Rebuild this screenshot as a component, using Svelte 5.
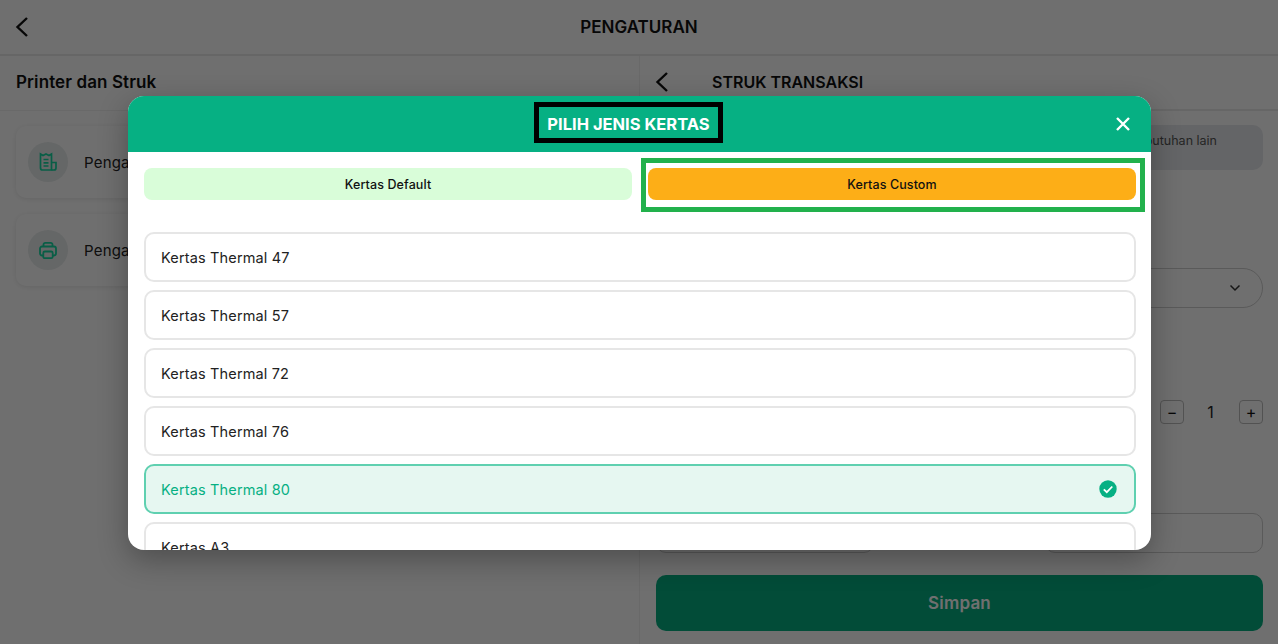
<script>
  const kertas = [
    { name: "Kertas Thermal 47" },
    { name: "Kertas Thermal 57" },
    { name: "Kertas Thermal 72" },
    { name: "Kertas Thermal 76" },
    { name: "Kertas Thermal 80", active: true },
    { name: "Kertas A3" }
  ];
</script>

<div class="page">
  <header class="topbar">
    <svg class="back" width="14" height="24" viewBox="0 0 14 24"><path d="M12 3 L2.500 12 L12 21" /></svg>
    <h1>PENGATURAN</h1>
  </header>

  <div class="columns">
    <section class="left">
      <h2 class="left-title">Printer dan Struk</h2>
      <div class="cards">
        <div class="card">
          <span class="circle">
            <svg width="20" height="20" viewBox="0 0 20 20" fill="none" stroke="#15d5a0" stroke-width="1.700">
              <path d="M2.500 2 L5 3.500 L8 2 L11 3.500 L13.500 2 V18 H4.500 A2 2 0 0 1 2.500 16 Z" />
              <path d="M5.500 7.500 H10.500 M5.500 10.800 H10.500 M5.500 14 H10.500 M13.500 10.500 H18 V16 A2 2 0 0 1 16 18 H13.500" />
            </svg>
          </span>
          <span>Pengaturan Struk</span>
        </div>
        <div class="card">
          <span class="circle">
            <svg width="20" height="20" viewBox="0 0 20 20" fill="none" stroke="#15d5a0" stroke-width="1.800">
              <path d="M5.500 6.500 V4.500 A1.800 1.800 0 0 1 7.300 2.800 H12.700 A1.800 1.800 0 0 1 14.500 4.500 V6.500" />
              <path d="M5 15.500 H4 A2 2 0 0 1 2 13.500 V8.500 A2 2 0 0 1 4 6.500 H16 A2 2 0 0 1 18 8.500 V13.500 A2 2 0 0 1 16 15.500 H15" />
              <rect x="5.300" y="11.500" width="9.400" height="6.700" rx="1.500" />
            </svg>
          </span>
          <span>Pengaturan Printer</span>
        </div>
      </div>
    </section>

    <section class="right">
      <div class="right-head">
        <svg class="back" width="14" height="24" viewBox="0 0 14 24"><path d="M12 3 L2.500 12 L12 21" /></svg>
        <h2>STRUK TRANSAKSI</h2>
      </div>
      <div class="right-body">
        <div class="note">Sesuaikan jenis kertas dengan kebutuhan lain</div>
        <div class="select">
          <svg width="12" height="8" viewBox="0 0 12 8" fill="none" stroke="#333" stroke-width="1.500"><path d="M1.500 1.500 L6 6 L10.500 1.500" /></svg>
        </div>
        <div class="stepper">
          <span class="step">−</span>
          <span class="count">1</span>
          <span class="step">+</span>
        </div>
        <div class="inputs">
          <div class="input"></div>
          <div class="input"></div>
        </div>
        <button class="save">Simpan</button>
      </div>
    </section>
  </div>

  <div class="backdrop"></div>

  <div class="modal">
    <div class="modal-head">
      <h3>PILIH JENIS KERTAS</h3>
      <svg class="close" width="16" height="16" viewBox="0 0 16 16"><path d="M2 2 L14 14 M14 2 L2 14" /></svg>
    </div>
    <div class="tabs">
      <button class="tab">Kertas Default</button>
      <button class="tab custom">Kertas Custom<span class="mark"></span></button>
    </div>
    <div class="list">
      {#each kertas as item}
        <div class="row" class:active={item.active}>
          <span>{item.name}</span>
          {#if item.active}
            <svg width="18" height="18" viewBox="0 0 18 18">
              <circle cx="9" cy="9" r="8.700" fill="#06b083" />
              <path d="M4.800 9.300 L7.800 12.200 L13.300 6.500" fill="none" stroke="#fff" stroke-width="1.800" />
            </svg>
          {/if}
        </div>
      {/each}
    </div>
  </div>
</div>

<style>
  :global(body) {
    margin: 0;
    background: #fff;
  }
  * {
    box-sizing: border-box;
  }
  h1, h2, h3 {
    margin: 0;
  }
  .page {
    position: relative;
    width: 1278px;
    height: 644px;
    overflow: hidden;
    font-family: "Inter", "Liberation Sans", sans-serif;
    color: #222;
    background: #fdfdfd;
  }
  .topbar {
    position: relative;
    height: 56px;
    display: flex;
    align-items: center;
    justify-content: center;
    padding-bottom: 1px;
    border-bottom: 2px solid #e8e8e8;
  }
  .topbar .back {
    position: absolute;
    left: 15px;
    top: 15px;
  }
  .back path {
    fill: none;
    stroke: #111;
    stroke-width: 2.400;
  }
  .topbar h1 {
    font-size: 17px;
    font-weight: 600;
    color: #111;
  }
  .columns {
    display: flex;
    height: 588px;
  }
  .left {
    width: 640px;
    border-right: 1px solid #eee;
  }
  .left-title {
    height: 55px;
    padding: 16px 16px 0;
    font-size: 17px;
    font-weight: 600;
    letter-spacing: 0.1px;
    color: #111;
    border-bottom: 1px solid #eee;
  }
  .cards {
    padding: 15px 16px;
    display: flex;
    flex-direction: column;
    gap: 16px;
  }
  .card {
    height: 72px;
    width: 607px;
    padding: 0 12px;
    display: flex;
    align-items: center;
    gap: 16px;
    border-radius: 10px;
    box-shadow: 0 1px 5px rgba(0, 0, 0, 0.1);
    font-size: 15px;
    letter-spacing: 0.2px;
  }
  .circle {
    width: 40px;
    height: 40px;
    border-radius: 50%;
    background: #e6eaea;
    display: flex;
    align-items: center;
    justify-content: center;
  }
  .right {
    flex: 1;
  }
  .right-head {
    height: 55px;
    padding-left: 15px;
    padding-bottom: 2px;
    display: flex;
    align-items: center;
    gap: 43px;
    border-bottom: 2px solid #e8e8e8;
  }
  .right-head h2 {
    font-size: 16px;
    font-weight: 600;
    color: #111;
  }
  .right-body {
    padding: 14px 15px 0 16px;
  }
  .note {
    height: 45px;
    padding: 8px 46px 0 14px;
    border-radius: 10px;
    background: #e4e6ea;
    font-size: 12.500px;
    color: #555;
    text-align: right;
  }
  .select {
    margin-top: 98px;
    height: 40px;
    border: 1px solid #ccc;
    border-radius: 20px;
    display: flex;
    align-items: center;
    justify-content: flex-end;
    padding-right: 21px;
  }
  .stepper {
    margin-top: 92px;
    display: flex;
    justify-content: flex-end;
    align-items: center;
  }
  .step {
    width: 24px;
    height: 24px;
    border: 1px solid #bbb;
    border-radius: 4px;
    display: flex;
    align-items: center;
    justify-content: center;
    font-size: 16px;
    color: #111;
  }
  .count {
    width: 55px;
    padding-right: 2px;
    text-align: center;
    font-size: 16px;
  }
  .inputs {
    margin-top: 89px;
    display: flex;
    justify-content: space-between;
  }
  .input {
    width: 218px;
    height: 40px;
    border: 1px solid #ccc;
    border-radius: 10px;
  }
  .save {
    display: block;
    width: 100%;
    height: 56px;
    margin-top: 22px;
    border: 0;
    border-radius: 10px;
    background: #06ad80;
    color: #fff;
    font: 600 17px "Inter", "Liberation Sans", sans-serif;
    letter-spacing: 0.2px;
    padding-bottom: 2px;
  }
  .backdrop {
    position: absolute;
    inset: 0;
    background: rgba(0, 0, 0, 0.56);
  }
  .modal {
    position: absolute;
    left: 128px;
    top: 96px;
    width: 1023px;
    height: 454px;
    border-radius: 16px;
    background: #fff;
    overflow: hidden;
    box-shadow: 0 10px 30px rgba(0, 0, 0, 0.3);
  }
  .modal-head {
    position: relative;
    height: 56px;
    padding: 0 22px 3px 0;
    background: #06b083;
    display: flex;
    align-items: center;
    justify-content: center;
  }
  .modal-head h3 {
    padding: 8px 8px 5px;
    border: 5px solid #000;
    font-size: 16.500px;
    font-weight: 700;
    color: #fff;
    line-height: 18px;
  }
  .close {
    position: absolute;
    right: 20px;
    top: 20px;
  }
  .close path {
    stroke: #fff;
    stroke-width: 2.400;
  }
  .tabs {
    padding: 16px 15px 0 16px;
    display: flex;
    gap: 16px;
  }
  .tab {
    flex: 1;
    position: relative;
    height: 32px;
    border: 0;
    border-radius: 8px;
    background: #d9fdd9;
    color: #111;
    font: 500 12.500px "Inter", "Liberation Sans", sans-serif;
    letter-spacing: 0.1px;
  }
  .tab.custom {
    background: #fdae17;
  }
  .mark {
    position: absolute;
    left: -7px;
    right: -9px;
    top: -10px;
    bottom: -12px;
    border: 5px solid #22b14c;
  }
  .list {
    padding: 32px 15px 0 16px;
    display: flex;
    flex-direction: column;
    gap: 8px;
  }
  .row {
    flex: none;
    height: 50px;
    padding: 0 17px 0 15px;
    display: flex;
    align-items: center;
    justify-content: space-between;
    border: 2px solid #e6e6e6;
    border-radius: 10px;
    font-size: 14.500px;
    letter-spacing: 0.15px;
    color: #222;
  }
  .row.active {
    border-color: #5fd0b0;
    background: #e6f7f1;
    color: #06b083;
  }
</style>
